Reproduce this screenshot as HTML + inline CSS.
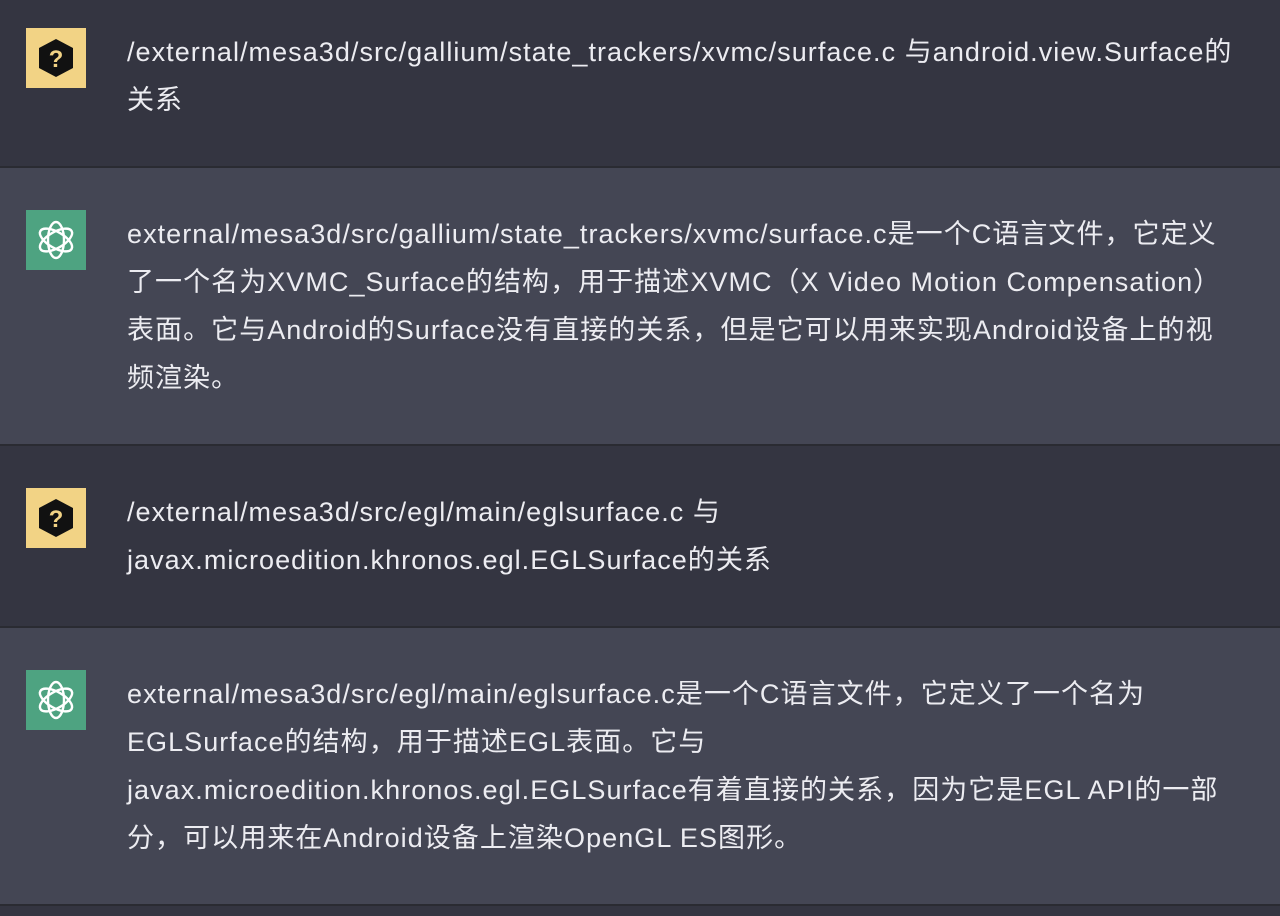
<!DOCTYPE html>
<html><head><meta charset="utf-8"><style>
*{margin:0;padding:0;box-sizing:border-box}
body{width:1280px;height:916px;overflow:hidden;background:#343541;font-family:"Liberation Sans","Noto Sans CJK SC",sans-serif;color:#ececf1}
.row{position:relative;border-bottom:2px solid #2a2b32}
.u{background:#343541}.a{background:#444654}
.ic{position:absolute;left:26px;width:60px;height:60px}
.t{position:absolute;left:127px;font-size:27px;line-height:48px;white-space:nowrap;letter-spacing:1.05px}
</style></head><body>
<div class="row u" style="height:168px">
<svg class="ic" style="top:28px" viewBox="0 0 60 60"><rect width="60" height="60" fill="#f2d385"/><polygon points="30,11 47,20 47,40 30,49 13,40 13,20" fill="#111"/><text x="30" y="39" font-size="24" font-weight="bold" fill="#f2d385" text-anchor="middle" font-family="Liberation Sans">?</text></svg>
<div class="t" style="top:28px">/external/mesa3d/src/gallium/state_trackers/xvmc/surface.c 与android.view.Surface的<br>关系</div>
</div>
<div class="row a" style="height:278px">
<svg class="ic" style="top:42px" viewBox="0 0 60 60"><rect width="60" height="60" fill="#4ea381"/><g fill="none" stroke="#fff" stroke-width="2.4"><ellipse cx="30" cy="30" rx="8" ry="18"/><ellipse cx="30" cy="30" rx="8" ry="18" transform="rotate(60 30 30)"/><ellipse cx="30" cy="30" rx="8" ry="18" transform="rotate(120 30 30)"/></g></svg>
<div class="t" style="top:42px">external/mesa3d/src/gallium/state_trackers/xvmc/surface.c是一个C语言文件，它定义<br>了一个名为XVMC_Surface的结构，用于描述XVMC（X Video Motion Compensation）<br>表面。它与Android的Surface没有直接的关系，但是它可以用来实现Android设备上的视<br>频渲染。</div>
</div>
<div class="row u" style="height:182px">
<svg class="ic" style="top:42px" viewBox="0 0 60 60"><rect width="60" height="60" fill="#f2d385"/><polygon points="30,11 47,20 47,40 30,49 13,40 13,20" fill="#111"/><text x="30" y="39" font-size="24" font-weight="bold" fill="#f2d385" text-anchor="middle" font-family="Liberation Sans">?</text></svg>
<div class="t" style="top:42px">/external/mesa3d/src/egl/main/eglsurface.c 与<br>javax.microedition.khronos.egl.EGLSurface的关系</div>
</div>
<div class="row a" style="height:278px">
<svg class="ic" style="top:42px" viewBox="0 0 60 60"><rect width="60" height="60" fill="#4ea381"/><g fill="none" stroke="#fff" stroke-width="2.4"><ellipse cx="30" cy="30" rx="8" ry="18"/><ellipse cx="30" cy="30" rx="8" ry="18" transform="rotate(60 30 30)"/><ellipse cx="30" cy="30" rx="8" ry="18" transform="rotate(120 30 30)"/></g></svg>
<div class="t" style="top:42px">external/mesa3d/src/egl/main/eglsurface.c是一个C语言文件，它定义了一个名为<br>EGLSurface的结构，用于描述EGL表面。它与<br>javax.microedition.khronos.egl.EGLSurface有着直接的关系，因为它是EGL API的一部<br>分，可以用来在Android设备上渲染OpenGL ES图形。</div>
</div>
</body></html>
